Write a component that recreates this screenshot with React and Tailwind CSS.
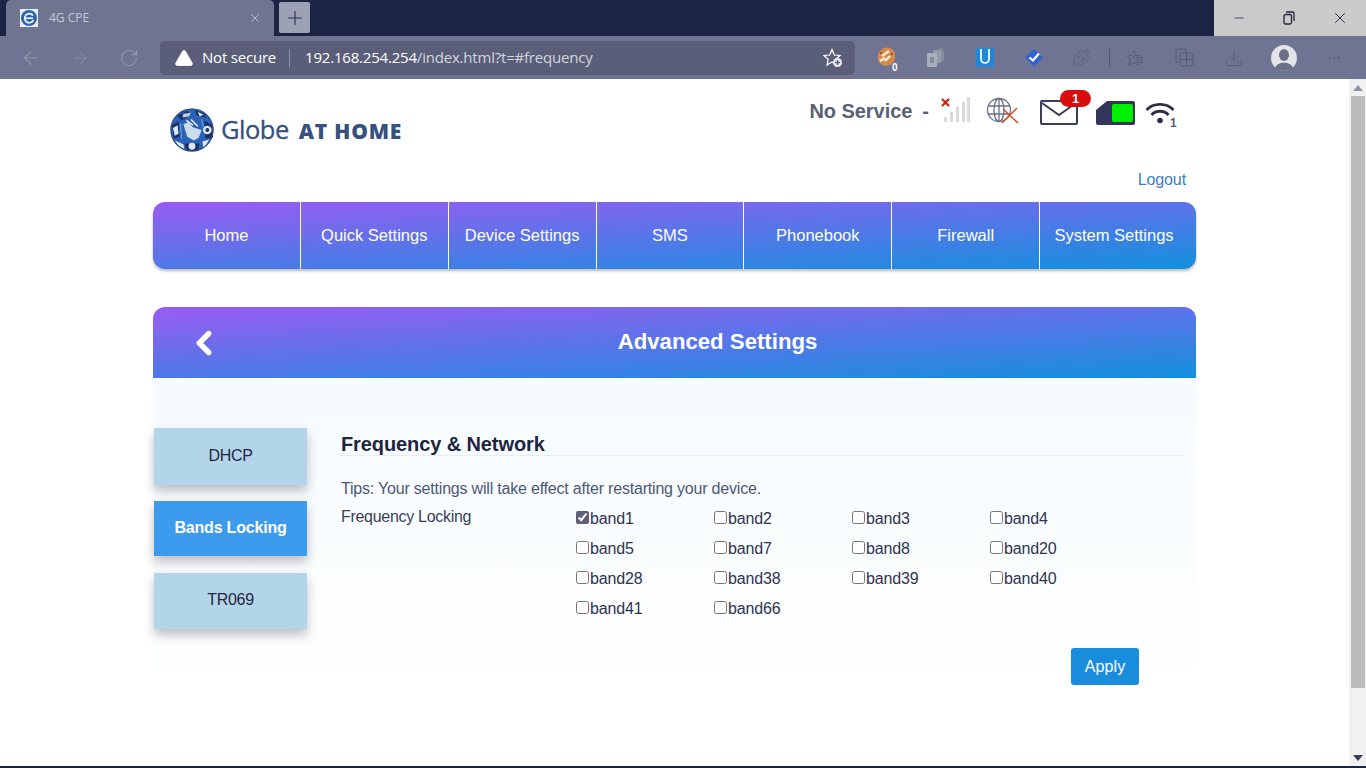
import { ArrowLeft, ArrowRight, RotateCw, X, Plus, Minus, Puzzle, Download, TriangleAlert, ChevronLeft } from 'lucide-react'

const menus = ['Home', 'Quick Settings', 'Device Settings', 'SMS', 'Phonebook', 'Firewall', 'System Settings']
const bands = ['band1', 'band2', 'band3', 'band4', 'band5', 'band7', 'band8', 'band20', 'band28', 'band38', 'band39', 'band40', 'band41', 'band66']

function GlobeLogo() {
  return (
    <svg width="44" height="44" viewBox="0 0 46 46">
      <circle cx="23" cy="23" r="22.5" fill="#2b62b8" />
      <path d="M8 8 L18 3 L22 7 L12 13 Z" fill="#1a2f63" />
      <path d="M14 6 L22 5 L20 9 L13 10 Z" fill="#b9cfe8" />
      <path d="M26 2 L36 6 L38 10 L28 8 Z" fill="#1a2f63" />
      <path d="M29 4 L35 7 L31 9 Z" fill="#dce8f4" />
      <path d="M2 18 L9 14 L10 30 L4 32 Z" fill="#1a2f63" />
      <path d="M3 21 L8 18 L9 27 L5 29 Z" fill="#dce8f4" />
      <path d="M36 13 L44 18 L45 31 L37 32 Z" fill="#1a2f63" />
      <circle cx="39" cy="23" r="4.5" fill="#dce8f4" />
      <circle cx="39" cy="23" r="2" fill="#1a2f63" />
      <path d="M14 17 L19 15 L24 20 L33 23 L30 31 L25 34 L18 30 Z" fill="#c9dbec" />
      <path d="M17 13 L24 18 M22 12 L29 19" stroke="#e6eef6" strokeWidth="1.6" />
      <path d="M15 37 L31 37 L29 45 L18 45 Z" fill="#1a2f63" />
      <circle cx="23" cy="40" r="3.6" fill="#dce8f4" />
      <path d="M5 34 L14 38 L15 43 L9 40 Z" fill="#dce8f4" />
      <path d="M34 35 L41 33 L35 43 Z" fill="#dce8f4" />
      <path d="M11 16 L12 32 M33 12 L35 20" stroke="#7fb0e6" strokeWidth="1" />
      <circle cx="23" cy="23" r="22" fill="none" stroke="#39507f" strokeWidth="1.2" />
    </svg>
  )
}

function SignalIcon() {
  return (
    <svg width="30" height="26" viewBox="0 0 30 26">
      <rect x="3" y="20" width="3" height="5" fill="#dadada" />
      <rect x="9" y="15" width="3" height="10" fill="#dadada" />
      <rect x="15" y="10" width="3" height="15" fill="#dadada" />
      <rect x="21" y="5" width="3" height="20" fill="#dadada" />
      <rect x="26" y="0" width="3" height="25" fill="#dadada" />
      <path d="M1 2 L8 9 M8 2 L1 9" stroke="#d3200c" strokeWidth="2.2" />
    </svg>
  )
}

function NetIcon() {
  return (
    <svg width="34" height="28" viewBox="0 0 34 28">
      <g fill="none" stroke="#6b6f8a" strokeWidth="1.3">
        <circle cx="13" cy="13" r="11.5" />
        <ellipse cx="13" cy="13" rx="5" ry="11.5" />
        <path d="M2 9 H24 M2 17 H24 M13 1.5 V24.5" />
      </g>
      <path d="M16 26 L31 11 M17 12 L32 26" stroke="#d2521c" strokeWidth="1.5" />
    </svg>
  )
}

function MailIcon() {
  return (
    <svg width="38" height="25" viewBox="0 0 38 25">
      <rect x="1" y="1" width="36" height="23" rx="1" fill="#fff" stroke="#3a3d5c" strokeWidth="2" />
      <path d="M2 3 L19 15 L36 3" fill="none" stroke="#3a3d5c" strokeWidth="2" />
    </svg>
  )
}

function SimIcon() {
  return (
    <svg width="39" height="24" viewBox="0 0 39 24">
      <path d="M11 0 H37 a2 2 0 0 1 2 2 V22 a2 2 0 0 1 -2 2 H2 a2 2 0 0 1 -2 -2 V9 Z" fill="#33365a" />
      <rect x="16" y="3" width="21" height="18" rx="2" fill="#00f000" />
    </svg>
  )
}

function WifiIcon() {
  return (
    <svg width="34" height="27" viewBox="0 0 34 27">
      <g fill="none" stroke="#2e3048" strokeWidth="2.8">
        <path d="M1.5 9 C 8 1.5, 22 1.5, 28.5 9" />
        <path d="M6.5 14 C 11 9, 19 9, 23.5 14" />
      </g>
      <circle cx="15" cy="19.5" r="2.8" fill="#2e3048" />
      <text x="25" y="25.5" fontSize="12" fontWeight="700" fill="#55586e" fontFamily="Liberation Sans">1</text>
    </svg>
  )
}

function FavAddIcon() {
  return (
    <svg width="20" height="20" viewBox="0 0 20 20">
      <path d="M9 1.5 L11.3 7 L17 7.5 L12.8 11.2 L14 17 L9 14 L4 17 L5.2 11.2 L1 7.5 L6.7 7 Z" fill="none" stroke="#fff" strokeWidth="1.2" />
      <circle cx="14.5" cy="14.5" r="4.5" fill="#e8e8ee" />
      <path d="M14.5 12 V17 M12 14.5 H17" stroke="#5a5e78" strokeWidth="1.3" />
    </svg>
  )
}

function PieExt() {
  return (
    <div className="relative w-[20px] h-[22px]">
      <svg width="19" height="20" viewBox="0 0 19 20">
        <path d="M4 3 C 8 -1, 15 0, 17.5 5 C 19.5 10, 17 16, 13 18 C 8 20, 3 18, 1 13 C 0 9, 1.5 5, 4 3 Z" fill="#d8894a" />
        <path d="M3 14 L8 11 M5 9 L12 4 M8 14 L13 9" stroke="#f8eede" strokeWidth="2.4" />
        <circle cx="15" cy="7" r="1" fill="#8a4a1c" />
        <circle cx="4" cy="6" r="1" fill="#8a4a1c" />
      </svg>
      <span className="absolute -right-[1px] -bottom-[4px] text-[10px] leading-none font-bold text-white font-['Liberation_Sans']">0</span>
    </div>
  )
}

function CopyExt() {
  return (
    <svg width="17" height="19" viewBox="0 0 17 19">
      <path d="M10 2 L15 0 L17 3 V13 L12 15 Z" fill="#878b9f" />
      <rect x="6" y="2" width="8" height="13" rx="1" fill="#979aad" />
      <rect x="0" y="5" width="10" height="14" rx="1" fill="#aaadbc" />
      <rect x="3" y="9" width="4" height="6" fill="#878b9f" />
    </svg>
  )
}

function UExt() {
  return (
    <svg width="18" height="19" viewBox="0 0 18 19">
      <rect width="18" height="19" fill="#1f86d8" />
      <path d="M5 1 V11 a4 4 0 0 0 8 0 V1" fill="none" stroke="#fff" strokeWidth="1.7" />
    </svg>
  )
}

function CheckExt() {
  return (
    <svg width="18" height="19" viewBox="0 0 18 19">
      <path d="M9 1 L18 9.5 L9 18.5 L0 9.5 Z" fill="#2f62d2" />
      <path d="M4.5 9.5 L8 12.5 L14 5.5" fill="none" stroke="#fff" strokeWidth="2.2" />
    </svg>
  )
}

function FavIcon() {
  return (
    <svg width="18" height="18" viewBox="0 0 18 18" className="text-[#565a75]">
      <path d="M7.5 1.5 L9.5 6.5 L14 6.8 M11 10 L12 16 L7.5 13.5 L3 16 L4.2 10.5 L1 7 L5.5 6.5 Z" fill="none" stroke="currentColor" strokeWidth="1" />
      <path d="M12 8.5 H17 M13 11 H17 M13.5 13.5 H17" stroke="currentColor" strokeWidth="1" />
    </svg>
  )
}

function CollectionIcon() {
  return (
    <svg width="19" height="19" viewBox="0 0 19 19" fill="none" stroke="#565a75" strokeWidth="1">
      <path d="M3 14 H2 a1 1 0 0 1 -1 -1 V2 a1 1 0 0 1 1 -1 H10 a1 1 0 0 1 1 1 V4" />
      <rect x="5" y="5" width="13" height="13" rx="2" />
      <path d="M5 11.5 H18 M11.5 5 V18" />
    </svg>
  )
}

function Avatar() {
  return (
    <svg width="26" height="26" viewBox="0 0 26 26">
      <circle cx="13" cy="13" r="13" fill="#e3e3e8" />
      <ellipse cx="13" cy="10" rx="5" ry="6" fill="#6b6f88" />
      <path d="M4 23 C 6 16, 20 16, 22 23 C 18 27, 8 27, 4 23 Z" fill="#6b6f88" />
    </svg>
  )
}

function ToolBtn({ children, className = 'w-[49px]' }) {
  return <div className={`${className} flex items-center justify-center shrink-0`}>{children}</div>
}

function BrowserChrome() {
  return (
    <div className="font-['Open_Sans','Liberation_Sans',sans-serif]">
      <div className="h-[36px] bg-[#1c2444] flex items-end pl-[6px]">
        <div className="w-[268px] h-[36px] bg-[#6f7490] rounded-t-[5px] flex items-center pl-[14px] pr-[12px]">
          <svg width="18" height="18" viewBox="0 0 18 18">
            <rect width="18" height="18" fill="#e9edf4" />
            <circle cx="9" cy="9" r="8" fill="#2c66b4" />
            <path d="M13 6.5 A4.6 4.6 0 1 0 13.5 11 M5 9.2 H13" fill="none" stroke="#fff" strokeWidth="1.6" />
          </svg>
          <span className="ml-[11px] text-[12px] text-[#c4c8d6]">4G CPE</span>
          <X className="ml-auto text-[#d5d7e1]" size={14} strokeWidth={1.3} />
        </div>
        <div className="ml-[5px] mb-[3px] w-[31px] h-[31px] bg-[#9da1b6] rounded-[2px] flex items-center justify-center">
          <Plus className="text-[#2c3252]" size={22} strokeWidth={1.2} />
        </div>
        <div className="ml-auto w-[152px] h-[36px] bg-[#cacaca] flex items-center text-[#23263a]">
          <div className="w-[50px] flex justify-center"><Minus size={14} strokeWidth={1.3} /></div>
          <div className="w-[50px] flex justify-center">
            <svg width="12" height="14" viewBox="0 0 12 14" fill="none" stroke="#23263a" strokeWidth="1.3">
              <rect x="1" y="3.5" width="7.5" height="9.5" rx="1.5" />
              <path d="M3 1 H9.5 a1.5 1.5 0 0 1 1.5 1.5 V10" />
            </svg>
          </div>
          <div className="w-[52px] flex justify-center"><X size={18} strokeWidth={1.2} /></div>
        </div>
      </div>
      <div className="h-[43px] bg-[#6e7491] flex items-center pl-[6px]">
        <ToolBtn><ArrowLeft className="text-[#9397af]" size={22} strokeWidth={1.3} /></ToolBtn>
        <ToolBtn><ArrowRight className="text-[#8a8ea8]" size={20} strokeWidth={1.2} /></ToolBtn>
        <ToolBtn><RotateCw className="text-[#9397af]" size={20} strokeWidth={1.3} /></ToolBtn>
        <div className="ml-[7px] w-[695px] h-[34px] bg-[#5a5e78] rounded-[5px] flex items-center pl-[14px] pr-[12px]">
          <TriangleAlert className="text-white fill-white" size={20} strokeWidth={1} />
          <span className="ml-[8px] text-[15px] text-white tracking-[-0.2px]">Not secure</span>
          <span className="ml-[13px] w-px h-[18px] bg-[#8d90a6]" />
          <span className="ml-[15px] text-[15px] tracking-[-0.2px] text-white">192.168.254.254<span className="text-[#d3d4de]">/index.html?t=#frequency</span></span>
          <div className="ml-auto"><FavAddIcon /></div>
        </div>
        <div className="ml-[7px] flex items-center">
          <ToolBtn><PieExt /></ToolBtn>
          <ToolBtn><CopyExt /></ToolBtn>
          <ToolBtn><UExt /></ToolBtn>
          <ToolBtn><CheckExt /></ToolBtn>
          <ToolBtn className="w-[46px]"><Puzzle className="text-[#5a5e78]" size={18} strokeWidth={1} /></ToolBtn>
          <div className="w-px h-[18px] bg-[#565a75] ml-[5px]" />
          <ToolBtn className="w-[50px]"><FavIcon /></ToolBtn>
          <ToolBtn><CollectionIcon /></ToolBtn>
          <ToolBtn><Download className="text-[#565a75]" size={20} strokeWidth={1} /></ToolBtn>
          <ToolBtn className="w-[51px]"><Avatar /></ToolBtn>
          <ToolBtn className="w-[51px]"><span className="text-[#565a75] text-[14px] leading-none tracking-[1px]">···</span></ToolBtn>
        </div>
      </div>
    </div>
  )
}

function Scrollbar() {
  return (
    <div className="w-[17px] h-[687px] bg-[#f1f1f1] flex flex-col items-center shrink-0">
      <div className="h-[17px] flex items-center justify-center">
        <svg width="10" height="6" viewBox="0 0 10 6"><path d="M5 0 L10 6 H0 Z" fill="#9094a9" /></svg>
      </div>
      <div className="w-[14px] h-[592px] bg-[#bcbcbc]" />
      <div className="mt-auto h-[17px] flex items-center justify-center">
        <svg width="10" height="6" viewBox="0 0 10 6"><path d="M0 0 H10 L5 6 Z" fill="#3a3d5c" /></svg>
      </div>
    </div>
  )
}

function TopStatus() {
  return (
    <div className="h-[123px] relative flex">
      <div className="ml-[17px] mt-[29px] flex items-start">
        <GlobeLogo />
        <span className="ml-[7px] mt-[3px] text-[25.5px] leading-[36px] text-[#34507f] tracking-[-0.5px] font-['Open_Sans',sans-serif] [-webkit-text-stroke:0.3px_#34507f]">Globe</span>
        <span className="ml-[10px] mt-[9px] text-[21px] leading-[28px] font-extrabold text-[#37517e] tracking-[0.8px] font-['Open_Sans',sans-serif]">AT HOME</span>
      </div>
      <div className="ml-auto mr-[17px] mt-[17px] flex items-start h-fit">
        <span className="mt-[3px] text-[20px] leading-[24px] font-bold text-[#5a5f78] tracking-[-0.05px]">No Service</span>
        <span className="ml-[10px] mt-[3px] text-[20px] leading-[24px] font-bold text-[#5a5f78]">-</span>
        <div className="ml-[12px] mt-[1px]"><SignalIcon /></div>
        <div className="ml-[15px] mt-[1px]"><NetIcon /></div>
        <div className="ml-[20px] mt-[4px] relative">
          <MailIcon />
          <span className="absolute -top-[10px] left-[20px] w-[31px] h-[17px] rounded-full bg-[#d90d0d] text-white text-[13px] leading-[17px] font-bold text-center">1</span>
        </div>
        <div className="ml-[18px] mt-[5px]"><SimIcon /></div>
        <div className="ml-[10px] mt-[5px]"><WifiIcon /></div>
      </div>
      <a className="absolute right-[10px] top-[91px] text-[16px] leading-[20px] tracking-[-0.1px] text-[#3a80c6]">Logout</a>
    </div>
  )
}

function NavBar() {
  return (
    <div className="h-[67px] rounded-[12px] bg-[linear-gradient(177deg,#9a5cf2_0%,#1290de_100%)] shadow-[0_2px_3px_rgba(0,0,0,0.28)] flex">
      {menus.map((m, i) => (
        <div key={m} className={`w-[147.85px] flex items-center justify-center text-white text-[16.5px] ${i < menus.length - 1 ? 'border-r border-white' : ''}`}>
          {m}
        </div>
      ))}
    </div>
  )
}

function SideItem({ label, active, className }) {
  return (
    <div className={`w-[153px] ml-px flex items-center justify-center pb-[2px] text-[16px] shadow-[0_6px_10px_rgba(60,60,70,0.32)] ${active ? 'bg-[#3d9bee] text-white font-bold tracking-[-0.2px]' : 'bg-[#b3d5ea] text-[#23263f] tracking-[-0.3px]'} ${className}`}>
      {label}
    </div>
  )
}

function BandsForm() {
  return (
    <div className="w-[842px] ml-[34px]">
      <div className="h-[26px] border-b border-[#e8edf2] mt-[2px]">
        <h2 className="text-[20px] leading-[28px] font-bold text-[#1f2440] tracking-[-0.1px]">Frequency &amp; Network</h2>
      </div>
      <p className="mt-[23px] text-[16px] leading-[20px] text-[#4d5874] tracking-[-0.2px]">Tips: Your settings will take effect after restarting your device.</p>
      <div className="mt-[8px] flex">
        <div className="w-[235px] text-[16px] leading-[20px] text-[#3a3f55] tracking-[-0.3px]">Frequency Locking</div>
        <div className="grid grid-cols-[138px_138px_138px_138px] auto-rows-[30px] -ml-px">
          {bands.map((b, i) => (
            <label key={b} className="flex items-start text-[16px] leading-[20px] text-[#2f3450] h-[30px] pt-[2px] tracking-[-0.15px]">
              <input type="checkbox" defaultChecked={i === 0} readOnly className="accent-[#5f6078] w-[13px] h-[13px] mt-[2px] ml-[1px] mr-[1px]" />
              {b}
            </label>
          ))}
        </div>
      </div>
      <div className="mt-[21px] flex justify-end pr-[44px]">
        <button className="w-[68px] h-[37px] rounded-[3px] bg-[#1a8cdc] text-white text-[16px] tracking-[0.1px]">Apply</button>
      </div>
    </div>
  )
}

export default function App() {
  return (
    <div className="w-[1366px] h-[768px] overflow-hidden bg-white font-['Liberation_Sans',Arial,sans-serif]">
      <BrowserChrome />
      <div className="flex h-[687px]">
        <div className="flex-1 pl-[153px] pr-[153px]">
          <TopStatus />
          <NavBar />
          <div className="mt-[38px] h-[71px] rounded-t-[12px] bg-[linear-gradient(177deg,#9a5cf2_0%,#1290de_100%)] relative flex items-center justify-center">
            <ChevronLeft className="absolute left-[32px] top-[17px] text-white" size={38} strokeWidth={3.4} />
            <span className="ml-[86px] -mt-[1px] text-white text-[22.2px] font-bold">Advanced Settings</span>
          </div>
          <div className="h-[388px] bg-[linear-gradient(180deg,#f5fbfe_0%,#ffffff_85%)] flex pt-[50px] items-start">
            <div className="flex flex-col w-[154px]">
              <SideItem label="DHCP" className="h-[57px]" />
              <SideItem label="Bands Locking" active className="h-[55px] mt-[16px]" />
              <SideItem label="TR069" className="h-[56px] mt-[17px]" />
            </div>
            <BandsForm />
          </div>
        </div>
        <Scrollbar />
      </div>
      <div className="h-[2px] bg-[#1c2444]" />
    </div>
  )
}
